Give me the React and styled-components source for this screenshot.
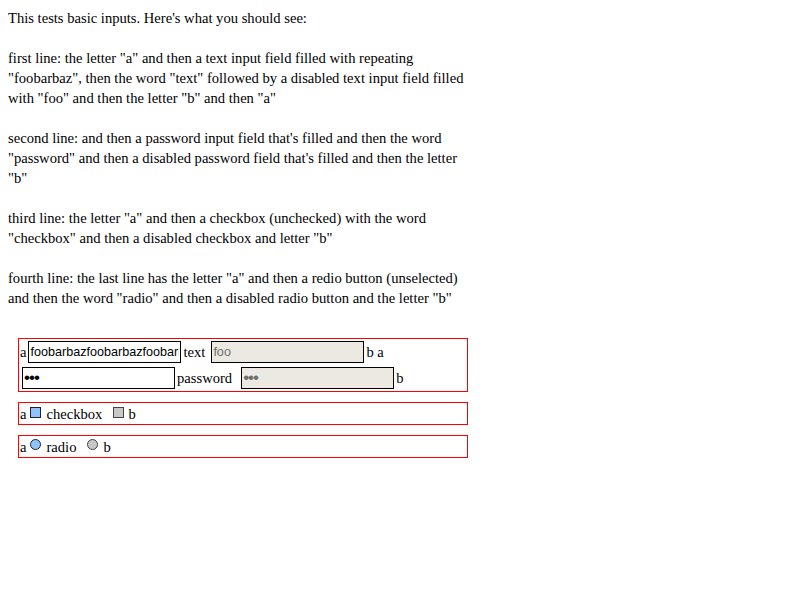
import React from "react";
import styled, { createGlobalStyle } from "styled-components";

const GlobalStyle = createGlobalStyle`
  body {
    margin: 8px;
    background: #fff;
    color: #000;
    font-family: "Liberation Serif", "Times New Roman", serif;
    font-size: 14.6px;
    line-height: 20px;
  }
`;

const Intro = styled.div`
  display: flex;
  flex-direction: column;
  gap: 20px;
  margin-bottom: 30px;
`;

const Para = styled.p`
  margin: 0;
  width: 466px;
`;

const Tests = styled.div`
  display: flex;
  flex-direction: column;
  gap: 10px;
  margin-left: 10px;
  width: 450px;
`;

const Box = styled.div`
  box-sizing: border-box;
  border: 1px solid #ff0000;
  padding: 0 1px;
`;

const Line = styled.div`
  display: flex;
  align-items: center;
  height: ${(p) => p.$h || 26}px;
  white-space: pre;
`;

const Word = styled.span`
  margin-left: ${(p) => p.$ml || 0}px;
`;

const Field = styled.input`
  box-sizing: border-box;
  width: 153px;
  height: 22px;
  margin: 0 0 0 ${(p) => p.$ml || 0}px;
  padding: 0 1px;
  border: 1px solid #000;
  border-radius: 0;
  outline: none;
  background: #fff;
  color: #000;
  font-family: "Liberation Sans", Arial, sans-serif;
  font-size: ${(p) => (p.type === "password" ? "17px" : "12.6px")};
  letter-spacing: ${(p) => (p.type === "password" ? "-1px" : "0")};
  -webkit-text-security: ${(p) => (p.type === "password" ? "square" : "none")};

  &:disabled {
    background: #ebe9e1;
    color: #808080;
    -webkit-text-fill-color: #6e6e6e;
  }
`;

const Check = styled.input`
  appearance: none;
  box-sizing: border-box;
  width: 11px;
  height: 11px;
  margin: 0 0 ${(p) => p.$lift || 0}px ${(p) => p.$ml || 0}px;
  border: 1px solid #222;
  border-radius: ${(p) => (p.type === "radio" ? "50%" : "0")};
  background: #8ec3ff;

  &:disabled {
    background: #c8c8c8;
    border-color: #444;
  }
`;

export default function App() {
  return (
    <>
      <GlobalStyle />
      <Intro>
        <Para>This tests basic inputs. Here's what you should see:</Para>
        <Para>
          first line: the letter "a" and then a text input field filled with
          repeating "foobarbaz", then the word "text" followed by a disabled
          text input field filled with "foo" and then the letter "b" and then
          "a"
        </Para>
        <Para>
          second line: and then a password input field that's filled and then
          the word "password" and then a disabled password field that's filled
          and then the letter "b"
        </Para>
        <Para>
          third line: the letter "a" and then a checkbox (unchecked) with the
          word "checkbox" and then a disabled checkbox and letter "b"
        </Para>
        <Para>
          fourth line: the last line has the letter "a" and then a redio button
          (unselected) and then the word "radio" and then a disabled radio
          button and the letter "b"
        </Para>
      </Intro>
      <Tests>
        <Box>
          <Line>
            <Word>a</Word>
            <Field
              $ml={2}
              type="text"
              readOnly
              value="foobarbazfoobarbazfoobarbazfoobarbaz"
            />
            <Word $ml={2}>text</Word>
            <Field $ml={6} type="text" disabled value="foo" />
            <Word $ml={2}>b a</Word>
          </Line>
          <Line>
            <Field $ml={2} type="password" readOnly value="foo" />
            <Word $ml={2}>password</Word>
            <Field $ml={9} type="password" disabled value="foo" />
            <Word $ml={2}>b</Word>
          </Line>
        </Box>
        <Box>
          <Line $h={21}>
            <Word>a</Word>
            <Check $ml={4} $lift={3} type="checkbox" />
            <Word $ml={5}>checkbox</Word>
            <Check $ml={11} $lift={3} type="checkbox" disabled />
            <Word $ml={4}>b</Word>
          </Line>
        </Box>
        <Box>
          <Line $h={21}>
            <Word>a</Word>
            <Check $ml={4} $lift={5} type="radio" />
            <Word $ml={5}>radio</Word>
            <Check $ml={11} $lift={5} type="radio" disabled />
            <Word $ml={5}>b</Word>
          </Line>
        </Box>
      </Tests>
    </>
  );
}
